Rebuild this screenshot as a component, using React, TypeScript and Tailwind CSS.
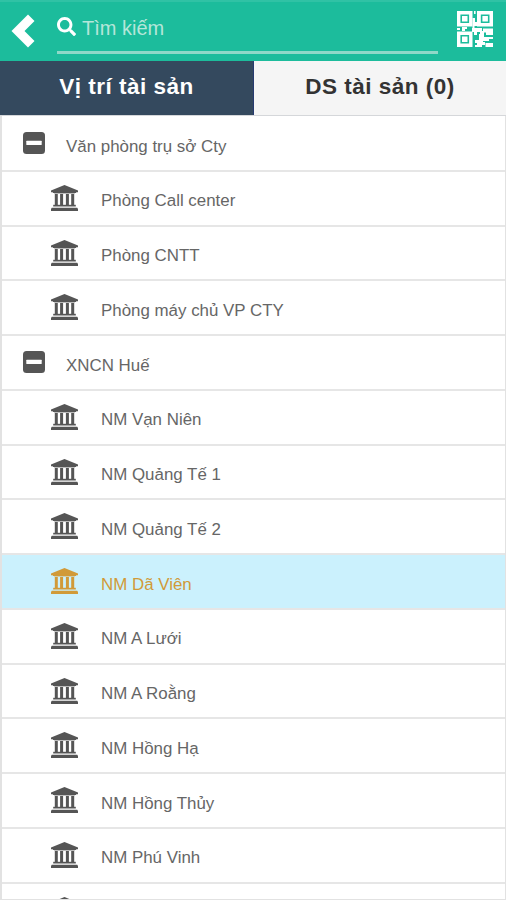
import React, { useState } from 'react';
import { FaSearch } from 'react-icons/fa';

interface AssetLocation {
  name: string;
  isGroup?: boolean;
}

const locations: AssetLocation[] = [
  { name: 'Văn phòng trụ sở Cty', isGroup: true },
  { name: 'Phòng Call center' },
  { name: 'Phòng CNTT' },
  { name: 'Phòng máy chủ VP CTY' },
  { name: 'XNCN Huế', isGroup: true },
  { name: 'NM Vạn Niên' },
  { name: 'NM Quảng Tế 1' },
  { name: 'NM Quảng Tế 2' },
  { name: 'NM Dã Viên' },
  { name: 'NM A Lưới' },
  { name: 'NM A Roằng' },
  { name: 'NM Hồng Hạ' },
  { name: 'NM Hồng Thủy' },
  { name: 'NM Phú Vinh' },
];

const BuildingIcon: React.FC = () => (
  <svg viewBox="0 0 27 26" className="h-[26px] w-[27px] shrink-0" fill="currentColor">
    <path d="M13.5 0 27 5.6V7.2h-1.6L24.8 8H2.2l-.6-.8H0V5.6z" />
    <path d="M3.8 9h3v11h-3zM9.1 9h3v11h-3zM14.9 9h3v11h-3zM20.2 9h3v11h-3z" />
    <path d="M2.2 19.8h22.6v1.7H2.2z" />
    <path d="M3.2 8h20.6v1H3.2z" opacity="0.4" />
    <path d="M0.8 22.8h25.4l.8 1V26H0v-2.2z" />
  </svg>
);

const CollapseIcon: React.FC = () => (
  <svg viewBox="0 0 22 22" className="h-[22px] w-[22px] shrink-0">
    <rect width="22" height="22" rx="3.5" fill="currentColor" />
    <rect x="3.3" y="8.7" width="15.4" height="4.3" rx="0.5" fill="#fff" />
  </svg>
);

const QrIcon: React.FC = () => (
  <svg viewBox="0 0 36 36" className="h-9 w-9" fill="#fff">
    <path
      fillRule="evenodd"
      d="M0 0h15.5v15.5H0zM3.4 3.4v8.7h8.7V3.4zM20 0h16v15.5H20zM23.8 3.4v8.7h8.7V3.4zM0 20.5h15.5V36H0zM3.4 23.9v8.7h8.7v-8.7z"
    />
    <path d="M5 5h5.5v5.5H5zM25.4 5h5.5v5.5h-5.5zM5 25.5h5.5V31H5z" />
    <path d="M17 0h1.6v3H17zM15.5 7H18v4h2v4h-2.5v2h-2zM0 17h3v2H0zM5 16h5v2H8v2H5zM15 17h10v3h2v4h-4v-3h-3v3h-3v-3h-2z" />
    <path d="M26 17.5h10V24h-7v-2.5h-3zM22 23h5v3h9v2h-4v2h-6v-2h-4zM18 29h4v-2h4v4h2v3h-3v2h-7v-2h2v-2h-2zM28.5 32H36v4h-7.5z" />
  </svg>
);

const Header: React.FC = () => (
  <header className="flex h-[61px] shrink-0 items-start border-t-2 border-[#30c2a5] bg-[#1cbc9c]">
    <button className="mt-[12px] ml-[11px]">
      <svg viewBox="0 0 24 34" className="h-[34px] w-6" fill="#fff">
        <path d="M17 0.5 23.5 7 13.5 17 23.5 27 17 33.5 0.5 17z" />
      </svg>
    </button>
    <label className="mt-[11px] ml-[22px] flex h-[41px] w-[381px] border-b-[3px] border-[#8fd8c8]">
      <FaSearch className="mt-[4px] h-[19px] w-[19px] text-white" />
      <span className="ml-[6px] h-[30px] text-[20px] leading-[30px] text-[#b5e6d9]">Tìm kiếm</span>
    </label>
    <button className="mt-[9px] ml-[19px]">
      <QrIcon />
    </button>
  </header>
);

const App: React.FC = () => {
  const [selected, setSelected] = useState('NM Dã Viên');

  return (
    <div className="flex h-[900px] w-[506px] flex-col overflow-hidden bg-white font-['Liberation_Sans',Arial,sans-serif]">
      <Header />
      <nav className="flex h-[55px] shrink-0 border-b border-[#d5d7da] text-[22.5px] font-bold tracking-[0.5px]">
        <button className="w-[254px] border-r border-[#273b70] bg-[#34495e] pb-[2px] text-white">Vị trí tài sản</button>
        <button className="flex-1 bg-[#f5f5f5] pb-[2px] text-[#333]">DS tài sản (0)</button>
      </nav>
      <ul className="flex-1 overflow-hidden border-r border-b border-l-2 border-[#e2e2e2] pt-px text-[16.9px]">
        {locations.map((item) => (
          <li
            key={item.name}
            onClick={() => setSelected(item.name)}
            className={`flex h-[54.77px] items-start border-b-2 border-[#e6e6e6] ${
              item.name === selected ? 'bg-[#cbf1fd] text-[#d19a38]' : 'text-[#666]'
            }`}
          >
            <span
              className={`flex ${item.isGroup ? 'mt-[15px] ml-[21px] w-[43px]' : 'mt-[13px] ml-[49px] w-[50px]'} ${
                item.name === selected ? '' : 'text-[#555]'
              }`}
            >
              {item.isGroup ? <CollapseIcon /> : <BuildingIcon />}
            </span>
            <span className="mt-[14.5px] leading-[30px]">{item.name}</span>
          </li>
        ))}
        {/* next row, only its icon peeks in */}
        <li className="pt-[13px] pl-[49px] text-[#555]">
          <BuildingIcon />
        </li>
      </ul>
    </div>
  );
};

export default App;
